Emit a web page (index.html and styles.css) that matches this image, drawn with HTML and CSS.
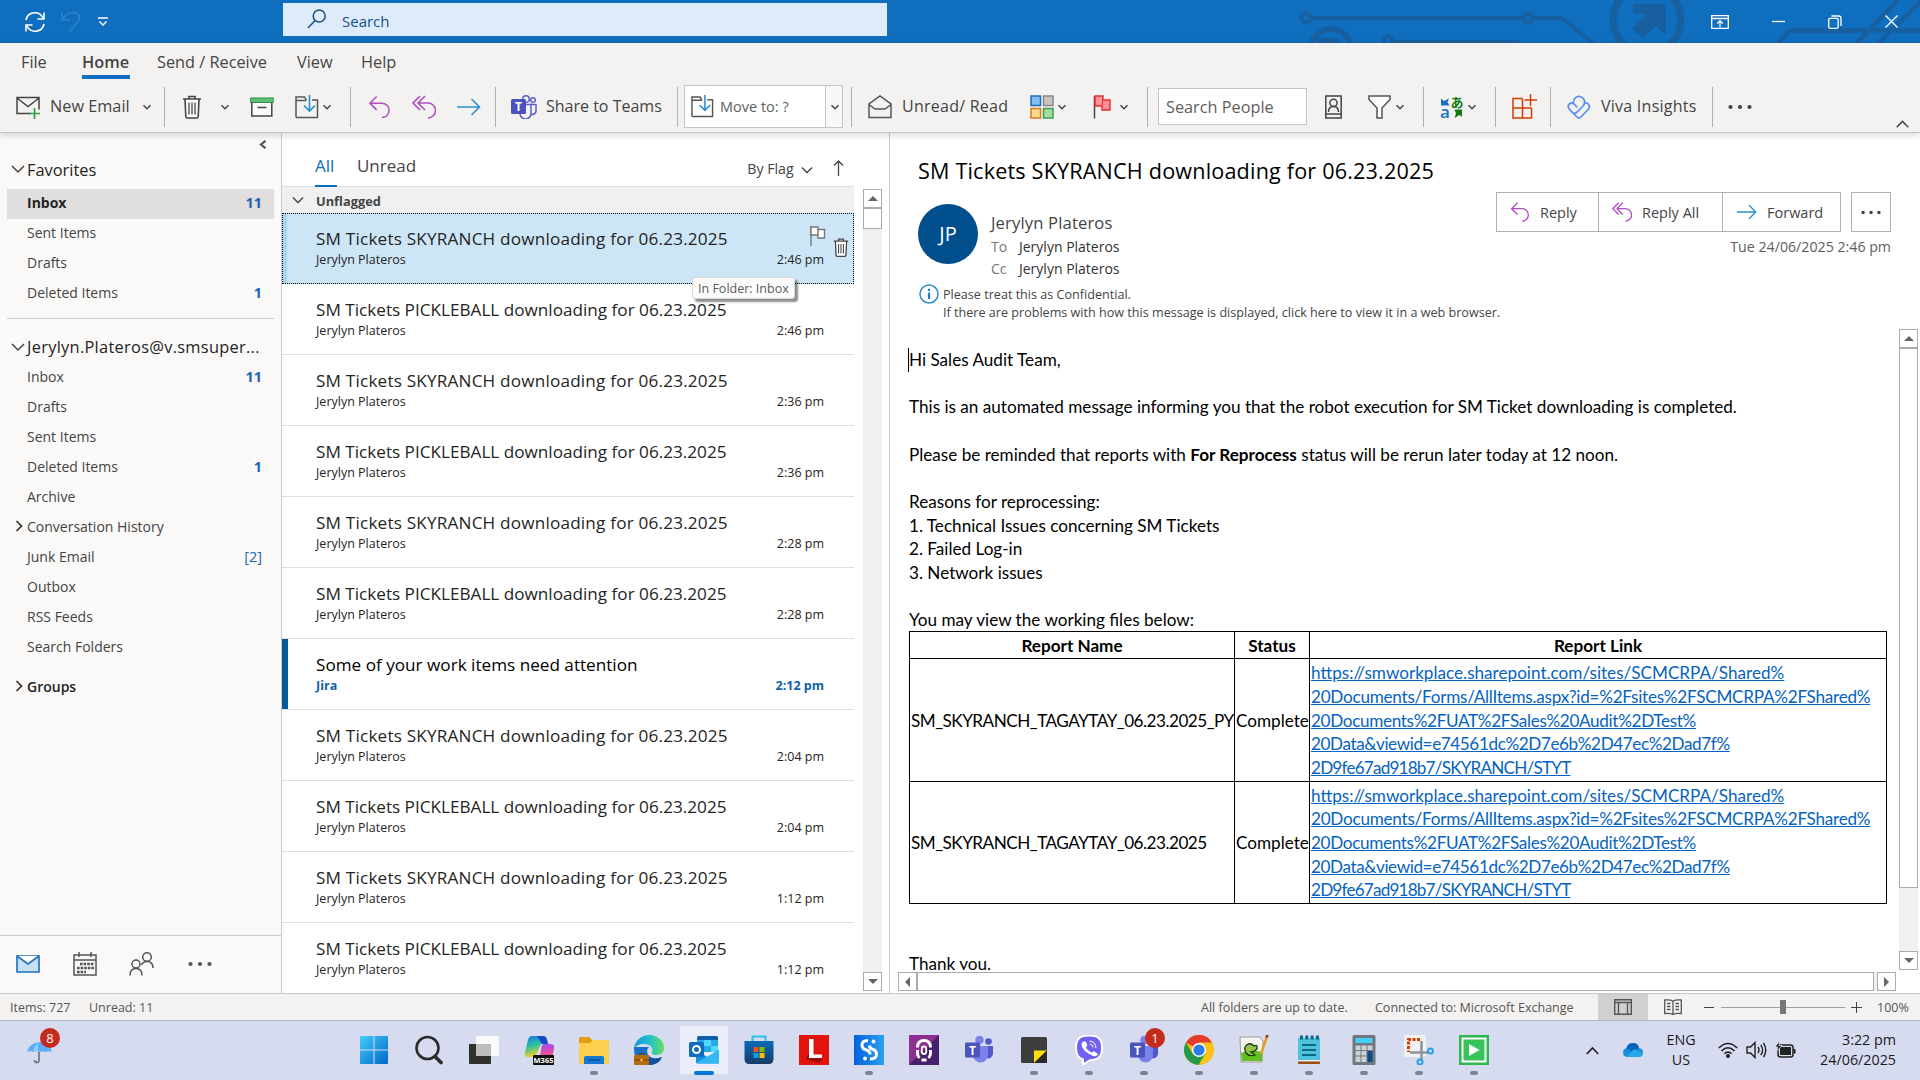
FILE: index.html
```html
<!DOCTYPE html>
<html lang="en">
<head>
<meta charset="utf-8">
<title>Inbox - Outlook</title>
<link rel="stylesheet" href="styles.css">
</head>
<body>
<svg class="defs" aria-hidden="true">
  <defs>
    <symbol id="chev" viewBox="0 0 10 10"><path d="M1.5 3.2 5 6.7 8.500 3.200" fill="none" stroke="#444" stroke-width="1.5"/></symbol>
    <symbol id="chevL" viewBox="0 0 14 14"><path d="M1 4 7 10 13 4" fill="none" stroke="#444" stroke-width="1.5"/></symbol>
    <symbol id="chevR" viewBox="0 0 14 14"><path d="M4.500 2 9.500 7 4.500 12" fill="none" stroke="#333" stroke-width="1.7"/></symbol>
    <symbol id="reply" viewBox="0 0 24 24"><path d="M9 1 2 8l7 7M2 8h12.500a7.300 7.300 0 0 1 0 15" fill="none" stroke="#b14fc0" stroke-width="1.600"/></symbol>
    <symbol id="replyall" viewBox="0 0 24 24"><path d="M8 1 1 8l7 7M13 1 6 8l7 7M6 8h10a7.300 7.300 0 0 1 0 15" fill="none" stroke="#b14fc0" stroke-width="1.600"/></symbol>
    <symbol id="forward" viewBox="0 0 24 24"><path d="M0 12h22M14.500 4l8 8-8 8" fill="none" stroke="#2b8fd0" stroke-width="1.600"/></symbol>
    <symbol id="movefolder" viewBox="0 0 24 24"><path d="M1 22.500V2h8.500l2 3.500M1 5.500h10M17 5h5.500v17.500H1" fill="none" stroke="#555" stroke-width="1.500"/><path d="M14.500 0v16M9 10.500l5.500 5.500 5.500-5.500" fill="none" stroke="#2b8fd0" stroke-width="1.600"/></symbol>
    <symbol id="trash" viewBox="0 0 20 24"><path d="M1 4h18M7 4V1.500h6V4M3 4l.8 17.500q.1 1.500 1.500 1.500h9.400q1.400 0 1.500-1.500L17 4" fill="#fff" stroke="#444" stroke-width="1.600"/><path d="M7 7.500v12M10 7.500v12M13 7.500v12" stroke="#444" stroke-width="1.300"/></symbol>
    <symbol id="dots" viewBox="0 0 24 6"><circle cx="2.500" cy="3" r="2.100"/><circle cx="12" cy="3" r="2.100"/><circle cx="21.500" cy="3" r="2.100"/></symbol>
    <symbol id="teams" viewBox="0 0 30 30"><circle cx="24.500" cy="6.500" r="3.300" fill="#5059c9"/><path d="M20 11h9v8a5 5 0 0 1-7 4z" fill="#5059c9"/><circle cx="15.500" cy="5" r="4.300" fill="#7b83eb"/><path d="M9 11h15v9a7.500 7.500 0 0 1-15 0z" fill="#7b83eb"/><rect x="1" y="7.500" width="15" height="15" rx="1.500" fill="#4b53bc"/><text x="8.500" y="19.500" text-anchor="middle" font-size="12" font-weight="700" fill="#fff">T</text></symbol>
  </defs>
</svg>

<header class="titlebar">
  <div class="quick">
    <svg width="22" height="22" viewBox="0 0 22 22" fill="none" stroke="#fff" stroke-width="1.600"><path d="M2 9a9 9 0 0 1 17-2M20 1.500V8h-6.500M20 13a9 9 0 0 1-17 2M2 20.500V14h6.500"/></svg>
    <svg width="19" height="22" viewBox="0 0 19 22" fill="none" stroke="#2b83d0" stroke-width="1.600"><path d="M1 1v8h8M1 9C4 4 8 1.500 12 1.500c7 0 8 6 4 10.500l-8 9"/></svg>
    <svg width="10" height="10" viewBox="0 0 10 10" fill="none" stroke="#fff" stroke-width="1.400"><path d="M0 1h10M1.500 4.500 5 8l3.500-3.500"/></svg>
  </div>
  <div class="search">
    <svg width="20" height="20" viewBox="0 0 20 20" fill="none" stroke="#14508c" stroke-width="1.500"><circle cx="12.200" cy="7" r="6"/><path d="M8 11.500 1 19"/></svg>
    <span>Search</span>
  </div>
  <svg class="circuit" width="640" height="43" viewBox="0 0 640 43" fill="none" stroke="#185f9f" stroke-width="4">
    <circle cx="26" cy="18" r="4.500"/><path d="M31 18h212M253 18h24q6 0 10 4l28 23"/><circle cx="248" cy="18" r="4.500"/>
    <circle cx="51" cy="49" r="20" stroke-width="6"/><path d="M38 38h21v7H38z" fill="#185f9f" stroke="none"/>
    <circle cx="108" cy="41" r="4.500"/><path d="M113 42h120q6 0 10 3"/>
    <circle cx="367" cy="20" r="34" stroke-width="7"/><path d="M353 4h33v32l-10-10-13 12-11-9 15-15h-14z" fill="#185f9f" stroke="none"/>
    <path d="M498 44l9-11q2-2.500 6-2.500h127M576 44l42-44M598 44l44-44" stroke-width="4.500"/>
  </svg>
  <div class="winbtns">
    <svg width="18" height="14" viewBox="0 0 18 14" fill="none" stroke="#fff" stroke-width="1.300"><path d="M.7.7h16.600v12.600H.7zM.7 3.500h16.600M9 12V6M6.200 8.500 9 5.700l2.800 2.800"/></svg>
    <svg width="13" height="13" viewBox="0 0 13 13" stroke="#fff" stroke-width="1.300"><path d="M0 6.500h13"/></svg>
    <svg width="14" height="14" viewBox="0 0 14 14" fill="none" stroke="#fff" stroke-width="1.300"><rect x=".7" y="3.300" width="9.500" height="10" rx="1.500"/><path d="M3.500 1h7q2.500 0 2.500 2.500v7.500"/></svg>
    <svg width="13" height="13" viewBox="0 0 13 13" stroke="#fff" stroke-width="1.300"><path d="M.5.5l12 12M12.500.5l-12 12"/></svg>
  </div>
</header>

<section class="ribbon">
  <nav class="tabs">
    <span class="tab-file">File</span><b class="tab-home">Home</b><span class="tab-send">Send / Receive</span><span class="tab-view">View</span><span>Help</span>
  </nav>
  <div class="toolbar">
    <svg width="25" height="24" viewBox="0 0 25 24" fill="none"><path d="M15 18.500H1v-16h22v12M1 3l11 8.500L23 3" stroke="#444" stroke-width="1.500"/><path d="M18.500 13v11M13 18.500h11" stroke="#2f9e44" stroke-width="1.700"/></svg>
    <span class="lbl lbl-new">New Email</span>
    <svg width="10" height="10"><use href="#chev"/></svg>
    <i class="sep"></i>
    <svg width="20" height="24"><use href="#trash"/></svg>
    <svg width="10" height="10"><use href="#chev"/></svg>
    <svg width="24" height="20" viewBox="0 0 24 20"><rect x="1.800" y="5" width="20" height="14" fill="#fafafa" stroke="#444" stroke-width="1.500"/><rect x=".7" y="1" width="22.500" height="4.500" fill="#5fbf77" stroke="#2f8f46"/><path d="M7.500 10.500h9" stroke="#444" stroke-width="1.500"/></svg>
    <svg width="24" height="24"><use href="#movefolder"/></svg>
    <svg width="10" height="10"><use href="#chev"/></svg>
    <i class="sep"></i>
    <svg width="23" height="24"><use href="#reply"/></svg>
    <svg width="24" height="24"><use href="#replyall"/></svg>
    <svg width="24" height="24"><use href="#forward"/></svg>
    <i class="sep"></i>
    <svg width="26" height="24" viewBox="0 0 26 24"><g fill="#f3f2f1" stroke="#5b63c9" stroke-width="1.500"><circle cx="22" cy="5" r="2.300"/><path d="M19 9.500h6v7q-1 3.500-5 3"/><circle cx="15" cy="4" r="3.300"/><path d="M9 9.500h11v9a5.500 5.500 0 0 1-11 0z"/></g><rect width="15" height="15" y="4" rx="1.500" fill="#4b53bc"/><text x="7.500" y="16" text-anchor="middle" font-size="12" font-weight="700" fill="#fff">T</text></svg>
    <span class="lbl lbl-teams">Share to Teams</span>
    <i class="sep"></i>
    <div class="combo"><div class="combo-main"><svg width="23" height="23" viewBox="0 0 24 24"><use href="#movefolder"/></svg><span>Move to: ?</span></div><svg width="10" height="10"><use href="#chev"/></svg></div>
    <i class="sep"></i>
    <svg width="24" height="24" viewBox="0 0 24 24" fill="none" stroke="#555" stroke-width="1.500"><path d="M1 22.500V9l11-8 11 8v13.500zM1 9.500 7 14h10l6-4.500"/></svg>
    <span class="lbl lbl-read">Unread/ Read</span>
    <svg width="24" height="24" viewBox="0 0 24 24" stroke-width="1.500"><rect x="1" y="1" width="9.500" height="9.500" fill="#83beec" stroke="#1b6fbf"/><rect x="13.500" y="1" width="9.500" height="9.500" fill="#c8c6c4" stroke="#8a8886"/><rect x="1" y="13.500" width="9.500" height="9.500" fill="#f8db8f" stroke="#e07b1a"/><rect x="13.500" y="13.500" width="9.500" height="9.500" fill="#a1dd9f" stroke="#3f9c55"/></svg>
    <svg width="10" height="10"><use href="#chev"/></svg>
    <svg width="18" height="24" viewBox="0 0 18 24"><path d="M1.500 1v22.500" stroke="#444" stroke-width="1.500"/><path d="M2 1h8v4h7v10H9v-4H2z" fill="#ff9199" stroke="#e0302c" stroke-width="1.400"/><path d="M9.500 4v7" stroke="#e0302c"/></svg>
    <svg width="10" height="10"><use href="#chev"/></svg>
    <i class="sep"></i>
    <div class="people">Search People</div>
    <svg width="17" height="24" viewBox="0 0 17 24" fill="none" stroke="#444" stroke-width="1.500"><path d="M.8 1h15.400v22H.8zM.8 19h15.400"/><circle cx="8.500" cy="7.800" r="3.600"/><path d="M3.500 17q0-5.500 5-5.500t5 5.500"/></svg>
    <svg width="23" height="24" viewBox="0 0 23 24" fill="#fff" stroke="#555" stroke-width="1.500"><path d="M1 1h21v3.500L14 13v10H9V13L1 4.500z"/></svg>
    <svg width="10" height="10"><use href="#chev"/></svg>
    <i class="sep"></i>
    <svg class="translate" width="24" height="24" viewBox="0 0 24 24"><path d="M1 3.500 4 6 9 3.500 7.500 7l2 3.500H1z" fill="#1b6fbf"/><text x="0" y="22.500" font-size="17" font-weight="600" fill="#1b74c4">a</text><text x="10.500" y="12" font-size="13" font-weight="700" fill="#107c10" class="kana">あ</text><path d="M14.500 14.500H22V22l-2.500-2-5 3 1.500-4.500z" fill="#107c10"/></svg>
    <svg width="10" height="10"><use href="#chev"/></svg>
    <i class="sep"></i>
    <svg width="25" height="25" viewBox="0 0 25 25" fill="none" stroke="#d83b01" stroke-width="1.500"><path d="M10.500 4.500H1v19.500h18.500v-10M1 14h18.500M10.500 4.500V24M18.500 0v12M12.500 6H25"/></svg>
    <i class="sep"></i>
    <svg width="24" height="24" viewBox="0 0 24 24" fill="none" stroke="#5b8def" stroke-width="1.700"><path d="M6.500 8A5.600 5.600 0 1 1 16 11l-6.500 6.500q-2 1.500-4 0l-3.300-3.500q-2-3 0-5 2.500-2 5 0l3 3.500M16.500 8.500q3-1.500 5 .8 1.800 2.300 0 4.700l-7.500 8q-2 2-4 0l-4-4"/></svg>
    <span class="lbl lbl-viva">Viva Insights</span>
    <i class="sep"></i>
    <svg width="24" height="6" fill="#444"><use href="#dots"/></svg>
    <svg class="collapse" width="13" height="8" viewBox="0 0 13 8" fill="none" stroke="#444" stroke-width="1.500"><path d="M.7 7.200 6.500 1.400l5.800 5.800"/></svg>
  </div>
</section>

<main>
  <aside>
    <div class="folders">
      <svg class="pin" width="8" height="9" viewBox="0 0 8 9" fill="none" stroke="#555" stroke-width="2.200"><path d="M6.500.8 2 4.500l4.500 3.700"/></svg>
      <div class="fhead fav"><svg width="14" height="14"><use href="#chevL"/></svg><span>Favorites</span></div>
      <div class="frow sel"><span>Inbox</span><b>11</b></div>
      <div class="frow"><span>Sent Items</span></div>
      <div class="frow"><span>Drafts</span></div>
      <div class="frow"><span>Deleted Items</span><b>1</b></div>
      <hr>
      <div class="fhead acct"><svg width="14" height="14"><use href="#chevL"/></svg><span>Jerylyn.Plateros@v.smsuper...</span></div>
      <div class="frow"><span>Inbox</span><b>11</b></div>
      <div class="frow"><span>Drafts</span></div>
      <div class="frow"><span>Sent Items</span></div>
      <div class="frow"><span>Deleted Items</span><b>1</b></div>
      <div class="frow"><span>Archive</span></div>
      <div class="frow sub"><svg width="14" height="14"><use href="#chevR"/></svg><span>Conversation History</span></div>
      <div class="frow"><span>Junk Email</span><em>[2]</em></div>
      <div class="frow"><span>Outbox</span></div>
      <div class="frow"><span>RSS Feeds</span></div>
      <div class="frow"><span>Search Folders</span></div>
      <div class="frow sub groups"><svg width="14" height="14"><use href="#chevR"/></svg><span>Groups</span></div>
    </div>
    <div class="modules">
      <svg width="24" height="18" viewBox="0 0 24 18"><path d="M1 1h22v16H1z" fill="#c7e0f4" stroke="#1b6fbf" stroke-width="1.600"/><path d="M1 1l11 8L23 1" fill="#fff" stroke="#1b6fbf" stroke-width="1.600"/></svg>
      <svg width="24" height="24" viewBox="0 0 24 24" fill="none" stroke="#555" stroke-width="1.500"><path d="M1 3h22v20H1zM1 8h22M6 0v5M18 0v5"/><path d="M7 12h14M4 16h17M4 20h9" stroke-width="2.600" stroke-dasharray="2.600 1"/></svg>
      <svg width="25" height="24" viewBox="0 0 25 24" fill="none" stroke="#555" stroke-width="1.500"><circle cx="7" cy="12" r="4"/><path d="M1 23.500q0-7 6-7t6 7"/><circle cx="18" cy="5" r="4.300"/><path d="M12.500 13q1.500-3.500 5.500-3.500 6 0 6 6.500"/></svg>
      <svg width="26" height="6" viewBox="0 0 24 6" fill="#555"><use href="#dots"/></svg>
    </div>
  </aside>

  <section class="list">
    <div class="listhead">
      <span class="f-all">All</span><span class="f-unread">Unread</span><span class="f-by">By Flag</span><svg width="12" height="12" viewBox="0 0 14 14"><use href="#chevL"/></svg>
      <svg class="sort" width="11" height="16" viewBox="0 0 11 16" fill="none" stroke="#444" stroke-width="1.300"><path d="M5.500 16V1M1 5.500 5.500 1 10 5.500"/></svg>
    </div>
    <div class="listbody">
      <div class="items">
        <div class="group"><svg width="12" height="12" viewBox="0 0 14 14"><use href="#chevL"/></svg><b>Unflagged</b></div>
        <article class="msg sky active"><h3>SM Tickets SKYRANCH downloading for 06.23.2025</h3><p><span>Jerylyn Plateros</span><time>2:46 pm</time></p>
          <svg class="flag" width="16" height="20" viewBox="0 0 16 20" fill="#fff" stroke="#777" stroke-width="1.400"><path d="M1 0v20" /><path d="M1 1h7v2.500h6.500v8.500H8V9H1z"/><path d="M8 3v6"/></svg>
          <svg class="bin" width="16" height="21" viewBox="0 0 20 24"><use href="#trash"/></svg>
          <div class="tip">In Folder: Inbox</div></article>
        <article class="msg"><h3>SM Tickets PICKLEBALL downloading for 06.23.2025</h3><p><span>Jerylyn Plateros</span><time>2:46 pm</time></p></article>
        <article class="msg sky"><h3>SM Tickets SKYRANCH downloading for 06.23.2025</h3><p><span>Jerylyn Plateros</span><time>2:36 pm</time></p></article>
        <article class="msg"><h3>SM Tickets PICKLEBALL downloading for 06.23.2025</h3><p><span>Jerylyn Plateros</span><time>2:36 pm</time></p></article>
        <article class="msg sky"><h3>SM Tickets SKYRANCH downloading for 06.23.2025</h3><p><span>Jerylyn Plateros</span><time>2:28 pm</time></p></article>
        <article class="msg"><h3>SM Tickets PICKLEBALL downloading for 06.23.2025</h3><p><span>Jerylyn Plateros</span><time>2:28 pm</time></p></article>
        <article class="msg unread"><h3>Some of your work items need attention</h3><p><span>Jira</span><time>2:12 pm</time></p></article>
        <article class="msg sky"><h3>SM Tickets SKYRANCH downloading for 06.23.2025</h3><p><span>Jerylyn Plateros</span><time>2:04 pm</time></p></article>
        <article class="msg"><h3>SM Tickets PICKLEBALL downloading for 06.23.2025</h3><p><span>Jerylyn Plateros</span><time>2:04 pm</time></p></article>
        <article class="msg sky"><h3>SM Tickets SKYRANCH downloading for 06.23.2025</h3><p><span>Jerylyn Plateros</span><time>1:12 pm</time></p></article>
        <article class="msg"><h3>SM Tickets PICKLEBALL downloading for 06.23.2025</h3><p><span>Jerylyn Plateros</span><time>1:12 pm</time></p></article>
      </div>
      <div class="vscroll"><i class="btn up"></i><i class="thumb short"></i><i class="space"></i><i class="btn down"></i></div>
    </div>
  </section>

  <section class="reading">
    <h1>SM Tickets SKYRANCH downloading for 06.23.2025</h1>
    <div class="meta">
      <div class="avatar">JP</div>
      <div class="who">
        <div class="from">Jerylyn Plateros</div>
        <div class="rcpt"><i>To</i>Jerylyn Plateros</div>
        <div class="rcpt"><i>Cc</i>Jerylyn Plateros</div>
      </div>
      <div class="acts">
        <div class="btns">
          <div class="trio">
            <span class="b1"><svg width="20" height="20" viewBox="0 0 24 24"><use href="#reply"/></svg>Reply</span><span class="b2"><svg width="20" height="20" viewBox="0 0 24 24"><use href="#replyall"/></svg>Reply All</span><span class="b3"><svg width="20" height="20" viewBox="0 0 24 24"><use href="#forward"/></svg>Forward</span>
          </div>
          <span class="more"><svg width="20" height="5" viewBox="0 0 24 6" fill="#444"><use href="#dots"/></svg></span>
        </div>
        <div class="date">Tue 24/06/2025 2:46 pm</div>
      </div>
    </div>
    <div class="notice">
      <svg width="20" height="20" viewBox="0 0 20 20"><circle cx="10" cy="10" r="9" fill="#fff" stroke="#2b8fd0" stroke-width="1.500"/><path d="M10 8.500V15M10 4.700v2.200" stroke="#1b7fc8" stroke-width="2.200"/></svg>
      <div>Please treat this as Confidential.<br>If there are problems with how this message is displayed, click here to view it in a web browser.</div>
    </div>
    <div class="bodywrap">
      <div class="body">
        <p class="caret">Hi Sales Audit Team,</p>
        <p class="gap">This is an automated message informing you that the robot execution for SM Ticket downloading is completed.</p>
        <p class="gap">Please be reminded that reports with <b>For Reprocess</b> status will be rerun later today at 12 noon.</p>
        <p class="gap">Reasons for reprocessing:</p>
        <p>1. Technical Issues concerning SM Tickets</p>
        <p>2. Failed Log-in</p>
        <p>3. Network issues</p>
        <p class="gap">You may view the working files below:</p>
        <table>
          <colgroup><col class="c1"><col class="c2"><col class="c3"></colgroup>
          <tr><th>Report Name</th><th>Status</th><th>Report Link</th></tr>
          <tr><td class="name">SM_SKYRANCH_TAGAYTAY_06.23.2025_PY</td><td>Complete</td><td><a>https://smworkplace.sharepoint.com/sites/SCMCRPA/Shared%<br><span class="l2">20Documents/Forms/AllItems.aspx?id=%2Fsites%2FSCMCRPA%2FShared%</span><br><span class="l3">20Documents%2FUAT%2FSales%20Audit%2DTest%</span><br><span class="l4">20Data&amp;viewid=e74561dc%2D7e6b%2D47ec%2Dad7f%</span><br><span class="l5">2D9fe67ad918b7/SKYRANCH/STYT</span></a></td></tr>
          <tr><td class="name">SM_SKYRANCH_TAGAYTAY_06.23.2025</td><td>Complete</td><td><a>https://smworkplace.sharepoint.com/sites/SCMCRPA/Shared%<br><span class="l2">20Documents/Forms/AllItems.aspx?id=%2Fsites%2FSCMCRPA%2FShared%</span><br><span class="l3">20Documents%2FUAT%2FSales%20Audit%2DTest%</span><br><span class="l4">20Data&amp;viewid=e74561dc%2D7e6b%2D47ec%2Dad7f%</span><br><span class="l5">2D9fe67ad918b7/SKYRANCH/STYT</span></a></td></tr>
        </table>
        <p class="thanks">Thank you.</p>
      </div>
      <div class="vscroll"><i class="btn up"></i><i class="thumb long"></i><i class="space"></i><i class="btn down"></i></div>
    </div>
    <div class="hscroll"><i class="btn left"></i><i class="thumb"></i><i class="btn right"></i></div>
  </section>
</main>

<footer class="status">
  <span class="s-items">Items: 727</span><span class="s-unread">Unread: 11</span>
  <span class="s-folders">All folders are up to date.</span><span class="s-conn">Connected to: Microsoft Exchange</span>
  <span class="view"><svg width="18" height="16" viewBox="0 0 18 16" fill="none" stroke="#555" stroke-width="1.400"><path d="M.7.700h16.600v14.600H.7zM.7 3.500h16.600M4.500 3.500v12M13.500 3.500v12"/></svg></span>
  <svg class="book" width="18" height="17" viewBox="0 0 18 17" fill="none" stroke="#555" stroke-width="1.300"><path d="M9 2Q6 .5.700 1v13.500Q6 14 9 15.500q3-1.500 8.300-1V1Q12 .5 9 2zv14M3 4.500h3.500M3 7.500h3.500M3 10.500h3.500M11.500 4.500H15M11.500 7.500H15M11.500 10.500H15"/></svg>
  <i class="minus"></i><i class="track"><i class="knob"></i></i><i class="plus"></i><span class="pct">100%</span>
</footer>

<footer class="taskbar">
  <div class="weather">
    <svg width="26" height="24" viewBox="0 0 26 24"><path d="M12 8v12q0 2.500-2.200 2.500T7.500 20" fill="none" stroke="#777a80" stroke-width="1.800"/><path d="M0 12Q2 3 12.500 2 23 3 25 12q-3-1.500-6 0-3-1.500-6.500 0-3.500-1.500-6.500 0-3-1.500-6 0z" fill="#5aaef5"/><path d="M6 12Q7 5 12.500 2 9 7 12.500 12q-3.500-1.500-6.500 0z" fill="#8fcbfb"/></svg>
    <b class="badge">8</b>
  </div>
  <div class="apps">
    <span><svg width="30" height="30" viewBox="0 0 30 30"><defs><linearGradient id="win" x2="1" y2="1"><stop stop-color="#45cbfb"/><stop offset="1" stop-color="#0067c8"/></linearGradient></defs><path d="M1 2q0-1 1-1h12.500v13.500H1zM15.500 1H28q1 0 1 1v12.500H15.500zM1 15.500h13.500V29H2q-1 0-1-1zM15.500 15.500H29V28q0 1-1 1H15.500z" fill="url(#win)"/></svg></span>
    <span><svg width="30" height="30" viewBox="0 0 30 30" fill="none" stroke="#2b2b2b"><circle cx="13.500" cy="13" r="11" stroke-width="2.600"/><path d="M21 21.500l6 6" stroke-width="3.600" stroke-linecap="round"/></svg></span>
    <span><svg width="30" height="30" viewBox="0 0 30 30"><rect x="0" y="9" width="22" height="20" rx="1" fill="#303030"/><rect x="7" y="1" width="23" height="20" rx="1.500" fill="#fafafa"/><path d="M7 9h15v12H7z" fill="#bdbdbd"/></svg></span>
    <span><svg width="30" height="30" viewBox="0 0 30 30"><defs><linearGradient id="cpa" x2=".3" y2="1"><stop stop-color="#1677e8"/><stop offset=".5" stop-color="#2bc0a0"/><stop offset="1" stop-color="#f5d020"/></linearGradient><linearGradient id="cpb" x2="0" y2="1"><stop stop-color="#a64af0"/><stop offset=".6" stop-color="#f0508c"/><stop offset="1" stop-color="#ff9a50"/></linearGradient></defs><path d="M8 1h11q3 0 4 4l1 4h-7l-4 9q-1 4-5 4H4q-4 0-3-5L4 5q1-4 4-4z" fill="url(#cpa)"/><path d="M13 1h6q3 0 4 4l1 4h-6z" fill="#1848c8"/><path d="M20 9h6q5 0 4 5l-2 9q-1 4-4 4H12q3-1 4-6l1.500-9Q18 9 20 9z" fill="url(#cpb)"/><rect x="9" y="20" width="21" height="10" rx="1" fill="#101010"/><text x="19.500" y="27.800" text-anchor="middle" font-size="7.500" font-weight="700" fill="#fff">M365</text></svg></span>
    <span class="run"><svg width="30" height="30" viewBox="0 0 30 30"><path d="M0 3q0-1 1-1h9l3 3h15q2 0 2 2v20q0 2-2 2H2q-2 0-2-2z" fill="#e0a010"/><path d="M0 8h11l3-3h14q2 0 2 2v20q0 2-2 2H2q-2 0-2-2z" fill="#ffd050"/><path d="M5 29v-6q0-2 2-2h16q2 0 2 2v6z" fill="#1478d0"/><path d="M9 25h12" stroke="#0a4f98" stroke-width="1.500"/></svg></span>
    <span><svg width="30" height="30" viewBox="0 0 30 30"><defs><linearGradient id="edg" x2="1"><stop stop-color="#1790d8"/><stop offset=".5" stop-color="#22c0d0"/><stop offset="1" stop-color="#5fe060"/></linearGradient></defs><path d="M0 14C0 24 6 30 15 30c6 0 10-3 13-8q-8 3-13-1-4-5 0-9H0z" fill="#1272cc"/><path d="M0 14C1 5 8 0 15 0c9 0 15 6 15 13 0 5-4 7-8 7-3 0-5-1-4-3 2-5-3-8-8-8S1 11 0 14z" fill="url(#edg)"/><path d="M15 22q5 4 13 0-3 8-13 8z" fill="#10509c"/><rect y="20" width="15" height="10" rx="1" fill="#b86a10"/><path d="M0 25h15M5 20v-1.500h5V20" stroke="#6f3c05" fill="none"/><circle cx="7.500" cy="25" r="1.200" fill="#ffd040"/></svg></span>
    <span class="cur"><svg width="30" height="30" viewBox="0 0 30 30"><rect x="8" y="1" width="21" height="14" rx="1.500" fill="#0f5fa8"/><path d="M8 5h21v12H8z" fill="#28a8ea"/><path d="M15 5h7v6h-7zM22 11h7v6h-7z" fill="#50d9ff"/><path d="M8 11h7v6H8z" fill="#0f78d4"/><path d="M7 15l11.500 7L30 15v12q0 1.500-1.500 1.500h-20Q7 28.500 7 27z" fill="#1490df"/><path d="M7 28l23-13v12q0 1.500-1.500 1.500h-20z" fill="#35b8f1"/><rect y="7" width="15" height="15" rx="1.500" fill="#0f6cbd"/><circle cx="7.500" cy="14.500" r="3.500" fill="none" stroke="#fff" stroke-width="2"/></svg></span>
    <span><svg width="30" height="30" viewBox="0 0 30 30"><defs><linearGradient id="st" x2="0" y2="1"><stop stop-color="#0a6cb8"/><stop offset="1" stop-color="#163a66"/></linearGradient></defs><path d="M8.500 7V1.500h13V7" fill="none" stroke="#28c0f0" stroke-width="2"/><path d="M.500 6h29v18q0 5-5 5h-19q-5 0-5-5z" fill="url(#st)"/><path d="M9.500 12h5v5h-5z" fill="#f25022"/><path d="M15.500 12h5v5h-5z" fill="#7fba00"/><path d="M9.500 18h5v5h-5z" fill="#00a4ef"/><path d="M15.500 18h5v5h-5z" fill="#ffb900"/></svg></span>
    <span><svg width="30" height="30" viewBox="0 0 30 30"><path d="M0 0h30v30H0z" fill="#e3130b"/><path d="M7 24l3-6v5h13v2l-3 3z" fill="#9c0d06"/><path d="M10 4h4.500v15.500H23V23H10z" fill="#fff"/></svg></span>
    <span class="run"><svg width="30" height="30" viewBox="0 0 30 30"><defs><linearGradient id="sb" x2="1"><stop stop-color="#0560e0"/><stop offset="1" stop-color="#2aa0ee"/></linearGradient></defs><path d="M0 0h30v30H0z" fill="url(#sb)"/><path d="M14 5.500q-6 0-6 4.500 0 4 4.500 5 3.500 1 3.500 4.500M15.500 10.500q0 3 3.500 4t3.500 4.500q0 5-6.500 5" fill="none" stroke="#fff" stroke-width="3"/><circle cx="19.500" cy="6.500" r="1.900" fill="#fff"/><circle cx="11" cy="23.500" r="1.900" fill="#fff"/></svg></span>
    <span><svg width="30" height="30" viewBox="0 0 30 30"><path d="M0 0h30v30H0z" fill="#8b2f90"/><path d="M30 0v30H0L15 15z" fill="#46206a"/><path d="M8.500 12.500q0-7 6.500-7t6.500 7M8.500 15v3.500q0 2.500 2 4.500M21.500 15v3.500q0 2.500-2 4.500M12.500 25h5" fill="none" stroke="#fff" stroke-width="3"/><rect x="12.800" y="11.500" width="4.400" height="7.500" rx="2.200" fill="none" stroke="#fff" stroke-width="1.800"/></svg></span>
    <span><svg width="30" height="30"><use href="#teams"/></svg></span>
    <span class="run"><svg width="30" height="30" viewBox="0 0 30 30"><rect x="2" y="2" width="26" height="26" rx="1.500" fill="#3d3d3d"/><path d="M15 15.500h13L15 28z" fill="#ffdc10"/><path d="M28 15.500V28H15z" fill="#2a2a2a"/></svg></span>
    <span class="run"><svg width="30" height="30" viewBox="0 0 30 30"><path d="M15 .500c9 0 13 3 13 12.500 0 8-3 12-12 12.300L9 29.500V24.500C3.500 23 2 19 2 13 2 3.500 6 .5 15 .5z" fill="#7360f2" stroke="#fff" stroke-width="2"/><path d="M9.500 6.500q2-1 3 1.500 1.500 2.500 0 3.500t2 4 4 1.500 3.500.5 1 3-4 .5Q8 16 7.500 9.500q0-2 2-3z" fill="#fff"/><path d="M15.500 6q6 .5 6.500 7M16 9q3 .5 3.200 3.500" fill="none" stroke="#fff"/></svg></span>
    <span class="run"><svg width="30" height="30"><use href="#teams"/></svg><b class="badge">1</b></span>
    <span class="run"><svg width="30" height="30" viewBox="0 0 30 30"><circle cx="15" cy="15" r="15" fill="#fbc116"/><path d="M15 15 2 7.500A15 15 0 0 1 28 7.500H15z" fill="#e33b2e"/><path d="M2 7.500A15 15 0 0 0 14.500 30l7-11.500-13 0z" fill="#229a48"/><circle cx="15" cy="15" r="7" fill="#fff"/><circle cx="15" cy="15" r="5.600" fill="#2a7de8"/></svg></span>
    <span class="run"><svg width="30" height="30" viewBox="0 0 30 30"><path d="M1 2h20l3 4-1 21H2z" fill="#f4f4ec" stroke="#888" stroke-width=".8"/><path d="M2 18q10-4 21-1v9H3z" fill="#62c020"/><path d="M6 12q4-6 9-1 4-2 3 3-3 3-6 3l4 3q-6 2-9-2-2-3-1-6z" fill="#8fc648" stroke="#1a3a10" stroke-width="1.300"/><path d="M22 19l6-18" stroke="#e39a20" stroke-width="2.400"/><path d="M27.500 2.500 28.500 0" stroke="#8a3a2a" stroke-width="2.600"/></svg></span>
    <span class="run"><svg width="30" height="30" viewBox="0 0 30 30"><path d="M4 3h22v23H4z" fill="#4fc3dc"/><path d="M4 26.500h22V28q0 1-1 1H5q-1 0-1-1z" fill="#9a5010"/><path d="M4 25.500h22" stroke="#f0f0f0"/><path d="M8 10h14M8 15h14M8 20h14" stroke="#0d6784" stroke-width="1.800"/><path d="M6 2.500h19" stroke="#0d6784" stroke-width="4" stroke-dasharray="3 2.300"/></svg></span>
    <span class="run"><svg width="30" height="30" viewBox="0 0 30 30"><rect x="3.500" width="23" height="30" rx="1.500" fill="#70787e"/><path d="M6.500 3h17v5h-17z" fill="#45d0f8"/><path d="M6.500 10.500h5v4.500h-5zM12.500 10.500h5v4.500h-5zM18.500 10.500h5v4.500h-5zM6.500 16h5v4.500h-5zM12.500 16h5v4.500h-5zM6.500 21.500h5V27h-5zM12.500 21.500h5V27h-5z" fill="#ccd2d6"/><path d="M18.500 16h5v11h-5z" fill="#114a88"/></svg></span>
    <span class="run"><svg width="30" height="30" viewBox="0 0 30 30"><rect width="22" height="22" rx="2" fill="#f2f2f2"/><path d="M16 4.500H4.500V17" fill="none" stroke="#d83b01" stroke-width="3" stroke-dasharray="3 1.500"/><path d="M17.500 6v19M6 17.500h19" stroke="#8c9298" stroke-width="2.400"/><circle cx="26.500" cy="16" r="2.500" fill="none" stroke="#28a0e8" stroke-width="2"/><circle cx="16" cy="27" r="2.500" fill="none" stroke="#28a0e8" stroke-width="2"/></svg></span>
    <span class="run"><svg width="30" height="30" viewBox="0 0 30 30"><path d="M0 0h30v30H0z" fill="#2db84c"/><path d="M3.500 3.500h23v23h-23z" fill="#36c45a" stroke="#fff" stroke-width="2"/><path d="M10 9l10.500 6L10 21z" fill="#fff"/></svg></span>
  </div>
  <div class="tray">
    <svg class="t-up" width="13" height="9" viewBox="0 0 13 9" fill="none" stroke="#222" stroke-width="1.700"><path d="M.8 8 6.500 2l5.700 6"/></svg>
    <svg class="t-cloud" width="21" height="14" viewBox="0 0 21 14"><path d="M5 14a4.600 4.600 0 0 1-.5-9Q6 0 11 0t6 5q4 .5 4 4.500T17 14z" fill="#1490df"/><path d="M4.500 5Q6 0 11 0t6 5l-7 4z" fill="#0d64b8"/><path d="M5 14h12q3.500-.5 4-3.500L12 6z" fill="#2aa8ee"/></svg>
    <div class="t-lang">ENG<br>US</div>
    <svg class="t-wifi" width="20" height="16" viewBox="0 0 20 16" fill="none" stroke="#222" stroke-width="1.500"><path d="M.800 6Q10-3 19.200 6M3.500 9Q10 2.500 16.500 9M6.300 11.800Q10 8.500 13.700 11.800"/><circle cx="10" cy="14" r="1.300" fill="#222"/></svg>
    <svg class="t-vol" width="21" height="18" viewBox="0 0 21 18" fill="none" stroke="#222" stroke-width="1.400"><path d="M1 6h3.500L9 1.500v15L4.500 12H1zM12 6q2 3 0 6M14.800 3.800q3.600 5.200 0 10.400M17.500 1.800q4.500 7.200 0 14.400"/></svg>
    <svg class="t-bat" width="22" height="18" viewBox="0 0 22 18"><rect x="3" y="4" width="15" height="12" rx="2.500" fill="none" stroke="#222" stroke-width="1.500"/><rect x="5" y="6" width="11" height="8" fill="#222"/><path d="M19.500 8v4.500" stroke="#222" stroke-width="2"/><path d="M4.500 0 0 6h2.800L1.500 10.500 7 4.500H4z" fill="#222" stroke="#d6daef" stroke-width=".8"/></svg>
    <div class="t-time">3:22 pm<br>24/06/2025</div>
  </div>
</footer>
</body>
</html>
```
FILE: styles.css
```css
* { box-sizing: border-box; }
html, body { margin: 0; width: 1920px; height: 1080px; overflow: hidden; }
body { display: flex; flex-direction: column; font-family: "Open Sans", "Noto Sans", sans-serif; color: #444; background: #fff; white-space: nowrap; }
svg { display: block; flex: none; }
svg text { font-family: "Open Sans", sans-serif; }
svg .kana { font-family: "Noto Sans CJK JP", sans-serif; }
h1, h3, p, hr { margin: 0; font-weight: 400; }
i, em { font-style: normal; }
.defs { position: absolute; width: 0; height: 0; }

/* Title bar */
.titlebar { height: 43px; flex: none; display: flex; background: #106ebe; position: relative; }
.quick { width: 283px; padding-left: 24px; display: flex; align-items: center; gap: 15px; }
.quick svg:last-child { margin-left: 3px; }
.search { width: 604px; height: 33px; margin-top: 3px; background: #deecf9; display: flex; align-items: center; padding-left: 24px; gap: 15px; font-size: 15px; line-height: 20px; color: #14508c; }
.search svg { margin-top: -2px; }
.search span { padding-top: 2px; }
.circuit { position: absolute; right: 0; top: 0; }
.winbtns { position: relative; margin-left: auto; display: flex; align-items: center; gap: 43px; padding-right: 22px; }

/* Ribbon */
.ribbon { height: 90px; flex: none; background: #f3f2f1; border-bottom: 1px solid #c8c6c4; box-shadow: 0 2px 7px rgba(0,0,0,.16); position: relative; z-index: 2; }
.tabs { height: 38px; display: flex; padding: 6px 0 0 21px; font-size: 16.300px; line-height: 26px; }
.tabs > * { height: 30px; }
.tab-file { width: 61px; }
.tab-home { width: 48px; border-bottom: 4px solid #106ebe; margin-right: 27px; font-weight: 600; }
.tab-send { width: 140px; }
.tab-view { width: 64px; }
.toolbar { height: 49px; display: grid; align-items: center; padding-left: 16px; margin-top: 1px;
  grid-template-columns: 34px 92px 22px 18px 38px 30px 45px 27px 28px 18px 44px 45px 38px 16px 35px 131px 7px 167px 17px 34px 128px 27px 36px 26px 28px 11px 167px 43px 27px 28px 17px 27px 28px 17px 38px 17px 34px 111px 16px 168px 14px; }
.sep { width: 1px; height: 40px; background: #b3b0ad; }
.lbl { font-size: 16px; line-height: 22px; margin-top: -1px; }
.lbl-new { font-size: 16.300px; }
.lbl-read, .lbl-viva { letter-spacing: .25px; }
.combo { width: 159px; height: 43px; border: 1px solid #c8c6c4; display: flex; align-items: center; background: #f8f8f8; gap: 4px; }
.combo-main { width: 141px; height: 41px; background: #fff; border-right: 1px solid #c8c6c4; display: flex; align-items: center; gap: 6px; padding-left: 6px; font-size: 14.500px; color: #605e5c; }
.people { width: 149px; height: 37px; border: 1px solid #c8c6c4; background: #fff; padding-left: 7px; line-height: 36px; font-size: 16.300px; color: #605e5c; }
.translate { overflow: visible; }
.collapse { margin-top: 35px; }

main { flex: 1; min-height: 0; display: flex; }

/* Folder pane */
aside { width: 282px; background: #faf9f8; border-right: 1px solid #d0cecc; display: flex; flex-direction: column; }
.folders { flex: 1; padding: 0 7px; }
.pin { margin: 7px 0 0 252px; }
.fhead { display: flex; align-items: center; gap: 2px; padding-left: 4px; font-size: 16.400px; color: #252423; }
.fav { height: 40px; }
.acct { height: 35px; margin-top: 10px; letter-spacing: .28px; }
.acct + .frow { margin-top: -1px; }
.frow { height: 30px; display: flex; align-items: center; justify-content: space-between; padding: 0 12px 4px 20px; font-size: 14px; }
.frow b, .frow em { color: #2266b3; font-weight: 700; font-size: 14.500px; }
.frow em { font-weight: 400; }
.frow.sel { background: #e1dfdd; color: #252423; font-weight: 700; }
.sub { justify-content: flex-start; padding-left: 5px; gap: 1px; }
.groups { margin-top: 10px; font-weight: 600; color: #252423; }
hr { border: 0; border-top: 1px solid #d0cecc; margin-top: 9px; }
.modules { height: 58px; border-top: 1px solid #d0cecc; display: flex; align-items: center; gap: 32.500px; padding: 0 0 1px 16px; }

/* Message list */
.list { width: 608px; border-right: 1px solid #d0cecc; display: flex; flex-direction: column; }
.listhead { height: 54px; width: 572px; border-bottom: 1px solid #e1dfdd; padding: 18px 10px 0 33px; display: flex; align-items: flex-start; font-size: 17px; line-height: 30px; }
.f-all { color: #0f6cbd; width: 22px; height: 36px; border-bottom: 2px solid #0f6cbd; }
.f-unread { margin-left: 20px; width: 392px; }
.f-by { font-size: 14.200px; line-height: 36px; width: 54px; }
.listhead svg { margin-top: 13px; }
.listhead .sort { margin: 9px 0 0 20px; }
.listbody { flex: 1; min-height: 0; display: flex; }
.items { width: 572px; overflow: hidden; }
.group { height: 26px; background: #f0f0f0; display: flex; align-items: center; gap: 12px; padding-left: 10px; font-size: 12.800px; }
.group b { padding-top: 1px; }
.msg { height: 71px; border-bottom: 1px solid #e1dfdd; padding: 13px 30px 0 34px; position: relative; color: #252423; }
.msg h3 { font-size: 17.150px; line-height: 26px; color: #252423; }
.sky h3 { letter-spacing: .19px; }
.msg p { display: flex; justify-content: space-between; font-size: 12.500px; line-height: 16px; }
.msg.active { background: #cde6f7; border: 1px dotted #000; padding: 12px 29px 0 33px; box-shadow: inset 4px 0 #a9d3f2; }
.msg.unread { box-shadow: inset 6px 0 #005a9e; }
.msg.unread p { color: #0f62ac; font-weight: 700; }
.msg.unread h3 { color: #000; }
.flag { position: absolute; right: 27px; top: 12px; }
.bin { position: absolute; right: 4px; top: 23px; }
.tip { position: absolute; z-index: 3; left: 409px; top: 63px; width: 103px; height: 22px; line-height: 21px; background: #fbfbfb; border: 1px solid #d8d8d8; border-radius: 3px; box-shadow: 3px 3px 2px rgba(0,0,0,.45); font-size: 12.500px; color: #5c5c5c; padding-left: 5px; }
.active { z-index: 1; }

/* Scroll bars */
.vscroll { width: 19px; display: flex; flex-direction: column; background: #f0f0f0; }
.btn, .thumb { display: block; flex: none; background: #fff; border: 1px solid #ababab; }
.btn { width: 19px; height: 19px; display: grid; place-items: center; }
.btn::after { content: ""; border: 5px solid transparent; }
.up::after { border-bottom-color: #666; margin-top: -5px; }
.down::after { border-top-color: #666; margin-bottom: -5px; }
.left::after { border-right-color: #666; margin-left: -5px; }
.right::after { border-left-color: #666; margin-right: -5px; }
.space { flex: 1; }
.list .vscroll { margin: 2px 0 2px 9px; width: 19px; }
.short { height: 21px; }

/* Reading pane */
.reading { flex: 1; min-width: 0; display: flex; flex-direction: column; padding: 20px 0 2px 8px; }
h1 { font-size: 21.600px; line-height: 36px; color: #000; padding-left: 20px; letter-spacing: .18px; }
.meta { display: flex; padding-left: 20px; height: 90px; }
.avatar { width: 60px; height: 60px; margin-top: 15px; border-radius: 50%; background: #004e8c; color: #fff; font-size: 20px; line-height: 60px; text-align: center; }
.who { padding: 21px 0 0 13px; }
.from { font-size: 16.600px; line-height: 26px; letter-spacing: .15px; }
.rcpt { font-size: 14px; line-height: 22px; display: flex; color: #333; }
.rcpt i { width: 28px; color: #777; }
.acts { margin: 3px 29px 0 auto; }
.btns { display: flex; gap: 10px; }
.trio { display: flex; border: 1px solid #b3b0ad; width: 345px; height: 40px; font-size: 14.500px; }
.trio span { display: flex; align-items: center; gap: 10px; padding-left: 14px; }
.trio span + span { border-left: 1px solid #b3b0ad; }
.trio .b1 { width: 101px; padding-left: 13px; } .trio .b2 { width: 124px; padding-left: 13px; } .b3 { width: 118px; }
.more { width: 40px; height: 40px; border: 1px solid #b3b0ad; display: grid; place-items: center; }
.date { text-align: right; font-size: 14.200px; line-height: 29px; color: #605e5c; }
.notice { display: flex; gap: 4px; padding: 5px 0 0 21px; font-size: 12.600px; line-height: 18px; height: 46px; }
.notice div { padding-top: 2px; }
.bodywrap { height: 641px; flex: none; display: flex; justify-content: space-between; padding-right: 2px; margin: 4px 0 2px; }
.body { width: 990px; padding: 19px 0 0 11px; height: 641px; overflow: hidden; font-family: Lato, sans-serif; font-size: 17.140px; line-height: 23.650px; color: #000; }
.gap { margin-top: 23.650px; }
.caret { border-left: 1px solid #000; margin-left: -1px; }
table { border-collapse: collapse; table-layout: fixed; width: 977px; margin-top: -1px; }
.c1 { width: 325px; } .c2 { width: 75px; } .c3 { width: 577px; }
th, td { border: 1px solid #000; }
td { padding: 2px 1px 1px; }
th { font-weight: 700; padding: 2px 0 1px; }
a { color: #0563c1; text-decoration: underline; }
.name { letter-spacing: -.5px; }
.l2 { letter-spacing: -.25px; }
.l3 { letter-spacing: -.33px; }
.l4 { letter-spacing: -.4px; }
.l5 { letter-spacing: -.8px; }
.thanks { margin-top: 47.500px; }
.long { height: 540px; }
.hscroll { display: flex; background: #f0f0f0; width: 998px; height: 19px; }
.hscroll .thumb { width: 957px; margin-right: auto; }

/* Status bar */
.status { height: 27px; flex: none; background: #f3f2f1; border-top: 1px solid #c8c6c4; display: flex; align-items: center; font-size: 12.500px; color: #555; padding-left: 10px; position: relative; z-index: 2; }
.s-items { width: 79px; } .s-unread { width: 1112px; } .s-folders { width: 174px; } .s-conn { width: 223px; }
.view { width: 50px; height: 26px; background: #d2d0ce; display: grid; place-items: center; }
.book { margin: 0 22px 0 16px; }
.minus { width: 10px; height: 1px; background: #444; margin-right: 7px; }
.track { width: 124px; height: 1px; background: #a19f9d; display: flex; align-items: center; justify-content: center; }
.knob { width: 6px; height: 14px; background: #777; }
.plus { width: 11px; height: 11px; margin: 0 15px 0 6px; background: linear-gradient(#444,#444) center/100% 1px no-repeat, linear-gradient(#444,#444) center/1px 100% no-repeat; }

/* Taskbar */
.taskbar { height: 60px; flex: none; background: #d7dbef; border-top: 1px solid #b0b2c0; display: flex; align-items: center; color: #1b1b1b; padding-bottom: 1px; }
.weather { width: 346px; padding: 4px 0 0 27px; position: relative; }
.badge { position: absolute; width: 20px; height: 20px; border-radius: 50%; background: #c42b1c; color: #fff; font-size: 13px; font-weight: 400; line-height: 20px; text-align: center; left: 40px; top: -8px; }
.apps { display: flex; width: 1155px; }
.apps span { width: 55px; height: 49px; display: grid; place-items: center; position: relative; }
.apps .badge { left: 29px; top: 2px; }
.run::after, .cur::after { content: ""; position: absolute; bottom: 0; left: 24px; width: 8px; height: 4px; border-radius: 2px; background: #80838f; }
.cur::after { width: 20px; left: 18px; background: #0078d4; }
.cur { background: linear-gradient(#ebeefa,#ebeefa) center/48px 48px no-repeat; }
.tray { flex: 1; display: flex; align-items: center; font-size: 14.300px; line-height: 20px; padding-left: 85px; }
.t-cloud { margin-left: 23px; }
.t-lang { width: 52px; margin-left: 12px; text-align: center; }
.t-wifi { margin-left: 11px; }
.t-vol { margin-left: 8px; }
.t-bat { margin-left: 8px; }
.t-time { margin-left: auto; padding-right: 24px; text-align: right; }
```
